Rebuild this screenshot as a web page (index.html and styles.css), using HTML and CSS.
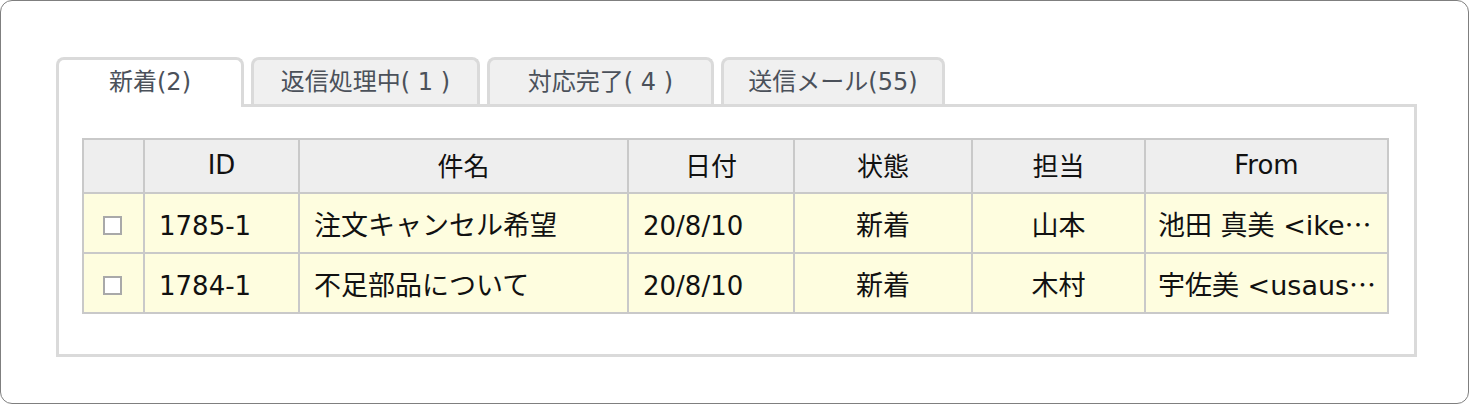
FILE: index.html
```html
<!DOCTYPE html>
<html lang="ja">
<head>
<meta charset="utf-8">
<title>メール一覧</title>
<link rel="stylesheet" href="styles.css">
</head>
<body>
<div class="frame">
  <div class="tabs">
    <div class="tab tab--active tab--new">新着(2)</div>
    <div class="tab tab--reply">返信処理中( 1 )</div>
    <div class="tab tab--done">対応完了( 4 )</div>
    <div class="tab tab--sent">送信メール(55)</div>
  </div>
  <div class="panel">
    <table class="mail-table">
      <colgroup>
        <col class="c-check">
        <col class="c-id">
        <col class="c-subject">
        <col class="c-date">
        <col class="c-status">
        <col class="c-owner">
        <col class="c-from">
      </colgroup>
      <thead>
        <tr>
          <th></th>
          <th>ID</th>
          <th>件名</th>
          <th>日付</th>
          <th>状態</th>
          <th>担当</th>
          <th>From</th>
        </tr>
      </thead>
      <tbody>
        <tr>
          <td class="cell-check"><span class="checkbox"></span></td>
          <td class="cell-left cell-num">1785-1</td>
          <td class="cell-left cell-subject">注文キャンセル希望</td>
          <td class="cell-left cell-num">20/8/10</td>
          <td class="cell-center">新着</td>
          <td class="cell-center">山本</td>
          <td class="cell-left cell-from">池田 真美 &lt;ike<span class="ell">…</span></td>
        </tr>
        <tr>
          <td class="cell-check"><span class="checkbox"></span></td>
          <td class="cell-left cell-num">1784-1</td>
          <td class="cell-left cell-subject">不足部品について</td>
          <td class="cell-left cell-num">20/8/10</td>
          <td class="cell-center">新着</td>
          <td class="cell-center">木村</td>
          <td class="cell-left cell-from">宇佐美 &lt;usaus<span class="ell">…</span></td>
        </tr>
      </tbody>
    </table>
  </div>
</div>
</body>
</html>
```

FILE: styles.css
```css
html, body {
  margin: 0;
  padding: 0;
  background: #ffffff;
}

body {
  font-family: "DejaVu Sans", "Noto Sans CJK JP", sans-serif;
  color: #111111;
}

.frame {
  box-sizing: border-box;
  width: 1469px;
  height: 404px;
  border: 1px solid #7f7f7f;
  border-radius: 12px;
  padding: 56px 51px 0 55px;
}

.tabs {
  display: flex;
  gap: 7px;
  align-items: flex-end;
  position: relative;
  z-index: 1;
}

.tab {
  box-sizing: border-box;
  height: 47px;
  border: 3px solid #dadada;
  border-bottom: none;
  border-radius: 8px 8px 0 0;
  background: #f0f0f0;
  color: #4b515a;
  font-size: 24px;
  line-height: 44px;
  text-align: center;
  white-space: nowrap;
}

.tab--active {
  background: #ffffff;
  height: 50px;
  margin-bottom: -3px;
}

.tab--new { width: 188px; }
.tab--reply { width: 229px; }
.tab--done { width: 227px; }
.tab--sent { width: 224px; }

.panel {
  box-sizing: border-box;
  width: 1361px;
  height: 253px;
  border: 3px solid #dadada;
  padding: 31px 24px 0 23px;
  background: #ffffff;
}

.mail-table {
  border-collapse: collapse;
  table-layout: fixed;
  width: 1307px;
  font-size: 27px;
}

.c-check { width: 61px; }
.c-id { width: 155px; }
.c-subject { width: 329px; }
.c-date { width: 166px; }
.c-status { width: 178px; }
.c-owner { width: 173px; }
.c-from { width: 243px; }

.mail-table th,
.mail-table td {
  border: 2px solid #c9c9c9;
  padding: 0;
  vertical-align: middle;
  white-space: nowrap;
  overflow: hidden;
}

.mail-table th {
  height: 49px;
  padding-bottom: 3px;
  background: #eeeeee;
  font-weight: normal;
  text-align: center;
  color: #111111;
  font-size: 26px;
}

.mail-table td {
  height: 58px;
  background: #fefddf;
  color: #111111;
}

.cell-left {
  text-align: left;
  padding-left: 14px !important;
}

.mail-table td.cell-num {
  font-size: 26px;
  height: 53px;
  padding-top: 5px;
}

.cell-from {
  padding-left: 12px !important;
}

.cell-center {
  text-align: center;
}

.cell-check {
  text-align: center;
}

.checkbox {
  display: inline-block;
  box-sizing: border-box;
  width: 19px;
  height: 19px;
  border: 2px solid #a9a9a9;
  background: #ffffff;
  vertical-align: middle;
  margin-left: -2px;
}

.ell {
  font-family: "Noto Sans CJK JP", sans-serif;
}
```
